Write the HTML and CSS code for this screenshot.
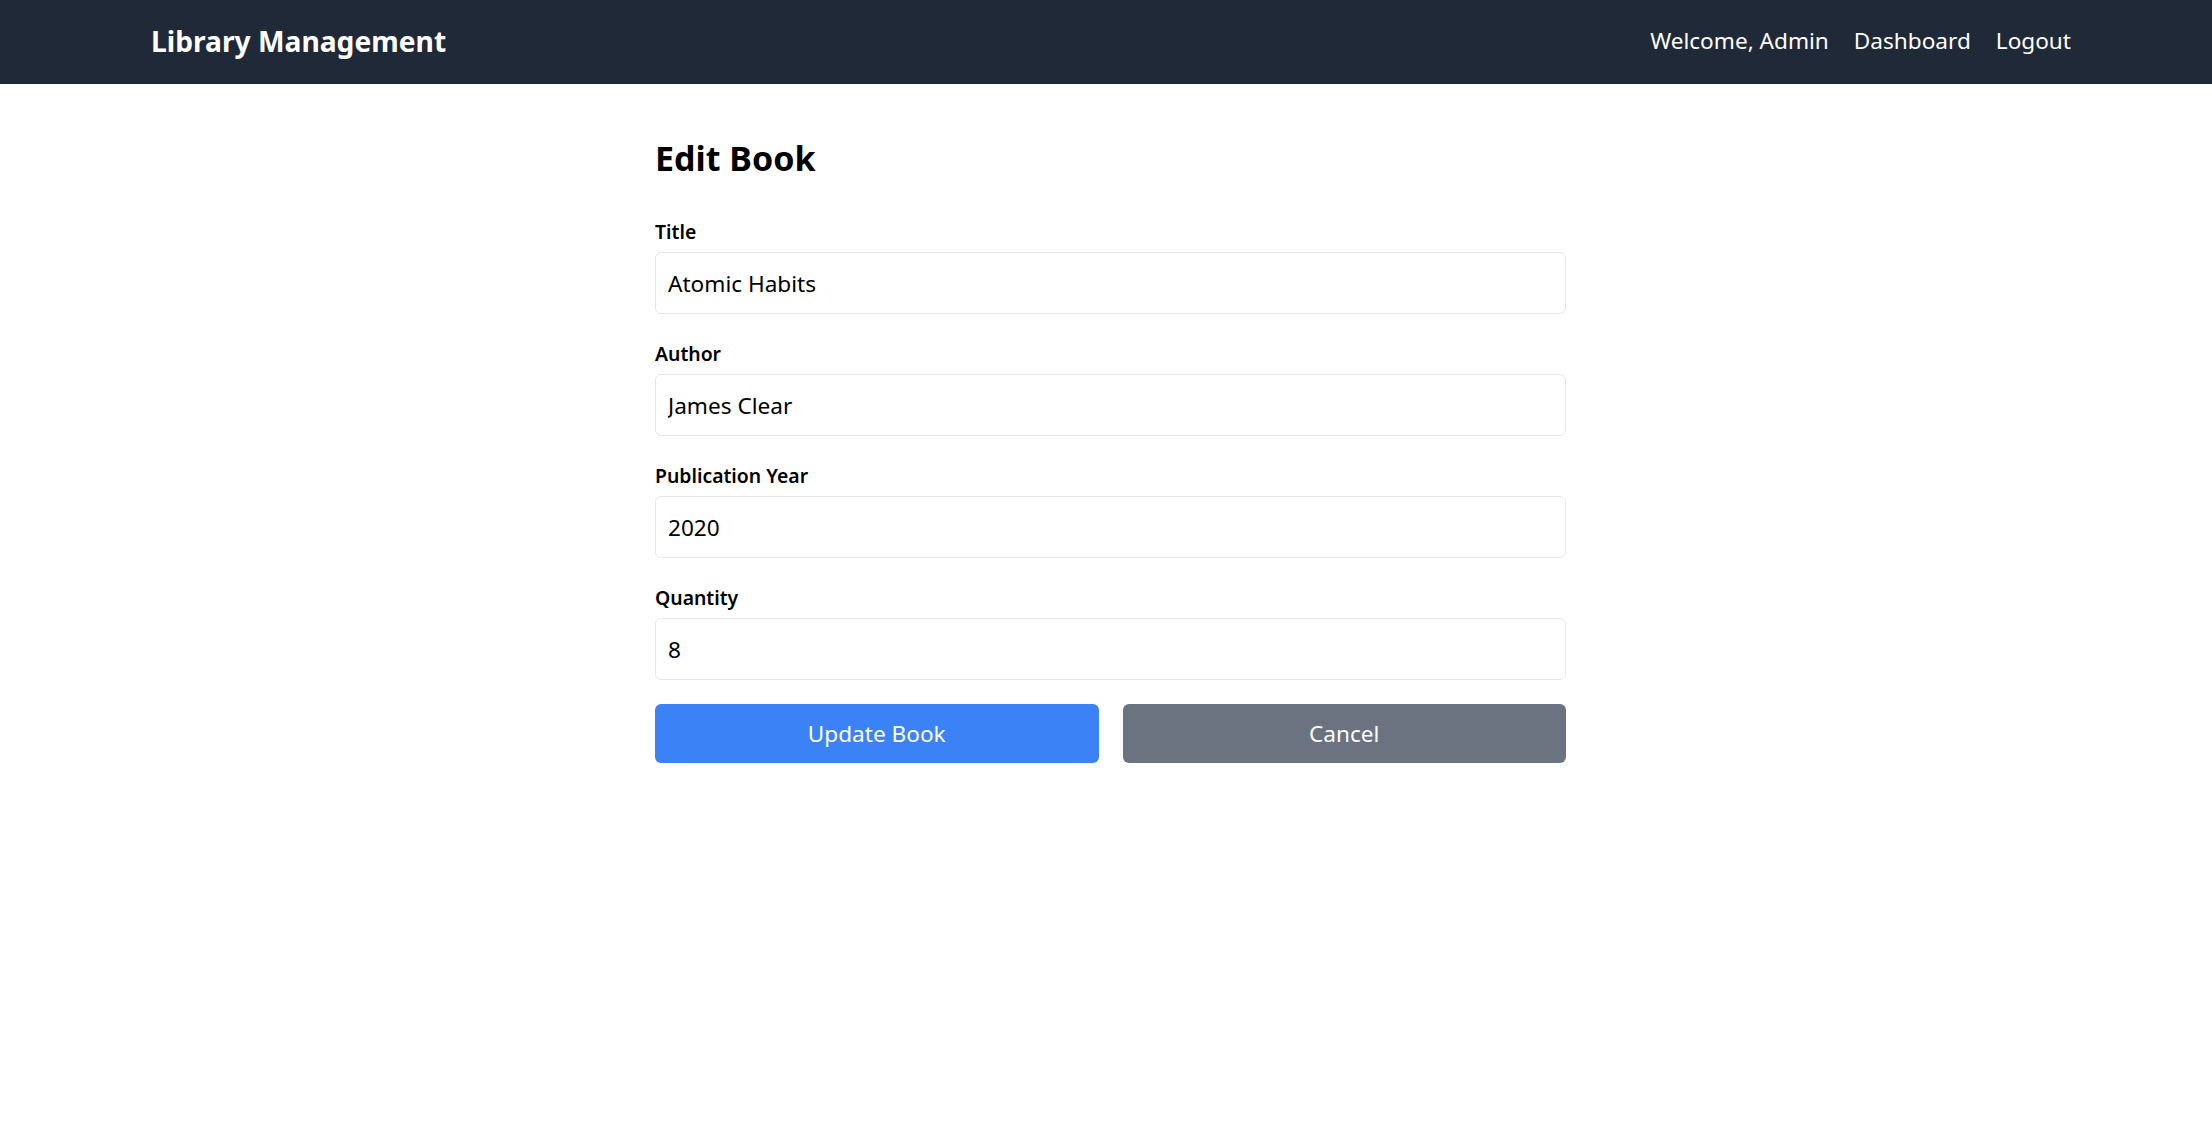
FILE: index.html
```html
<!DOCTYPE html>
<html lang="en">
<head>
<meta charset="utf-8">
<title>Edit Book - Library Management</title>
<link rel="stylesheet" href="styles.css">
</head>
<body>
<nav class="navbar">
  <div class="nav-inner">
    <a class="brand" href="#">Library Management</a>
    <div class="nav-links">
      <span class="nav-item">Welcome, Admin</span>
      <a class="nav-item" href="#">Dashboard</a>
      <a class="nav-item" href="#">Logout</a>
    </div>
  </div>
</nav>
<main class="page">
  <h1 class="page-title">Edit Book</h1>
  <form class="book-form">
    <div class="field">
      <label class="field-label" for="title">Title</label>
      <input class="field-input" id="title" type="text" value="Atomic Habits">
    </div>
    <div class="field">
      <label class="field-label" for="author">Author</label>
      <input class="field-input" id="author" type="text" value="James Clear">
    </div>
    <div class="field">
      <label class="field-label" for="year">Publication Year</label>
      <input class="field-input" id="year" type="text" value="2020">
    </div>
    <div class="field field-last">
      <label class="field-label" for="qty">Quantity</label>
      <input class="field-input" id="qty" type="text" value="8">
    </div>
    <div class="actions">
      <button class="btn btn-primary" type="button">Update Book</button>
      <button class="btn btn-secondary" type="button">Cancel</button>
    </div>
  </form>
</main>
</body>
</html>
```
FILE: styles.css
```css
* { box-sizing: border-box; }
html, body {
  margin: 0;
  padding: 0;
  background: #ffffff;
  font-family: "Segoe UI", "Noto Sans", "Open Sans", sans-serif;
  color: #000;
}
.navbar {
  background: #1f2937;
  height: 84px;
}
.nav-inner {
  height: 100%;
  display: flex;
  align-items: center;
  justify-content: space-between;
  padding: 0 141px 0 151px;
}
.brand {
  color: #fff;
  text-decoration: none;
  font-weight: 700;
  font-size: 28.2px;
  line-height: 36px;
  margin-top: -2px;
}
.nav-links {
  display: flex;
  align-items: center;
  gap: 25px;
  margin-top: -2px;
}
.nav-item {
  color: #fff;
  text-decoration: none;
  font-size: 22.6px;
  line-height: 30px;
}
.page {
  width: 911px;
  margin-left: calc(50% - 451px);
  padding-top: 54px;
}
.page-title {
  margin: 0 0 40px 0;
  font-size: 34px;
  line-height: 40px;
  font-weight: 700;
}
.field {
  margin-bottom: 26px;
}
.field-last {
  margin-bottom: 24px;
}
.field-label {
  display: block;
  font-size: 19.4px;
  line-height: 28px;
  font-weight: 600;
  margin-bottom: 6px;
}
.field-input {
  display: block;
  width: 100%;
  height: 62px;
  border: 1px solid #e5e7eb;
  border-radius: 6px;
  padding: 0 12px;
  font-family: inherit;
  font-size: 22.6px;
  color: #000;
  background: #fff;
  outline: none;
}
.actions {
  display: flex;
  gap: 24px;
}
.btn {
  flex: 1 1 0;
  height: 59px;
  border: 0;
  border-radius: 6px;
  color: #fff;
  font-family: inherit;
  font-size: 22.6px;
  cursor: pointer;
}
.btn-primary { background: #3b82f6; }
.btn-secondary { background: #6b7280; }
```
